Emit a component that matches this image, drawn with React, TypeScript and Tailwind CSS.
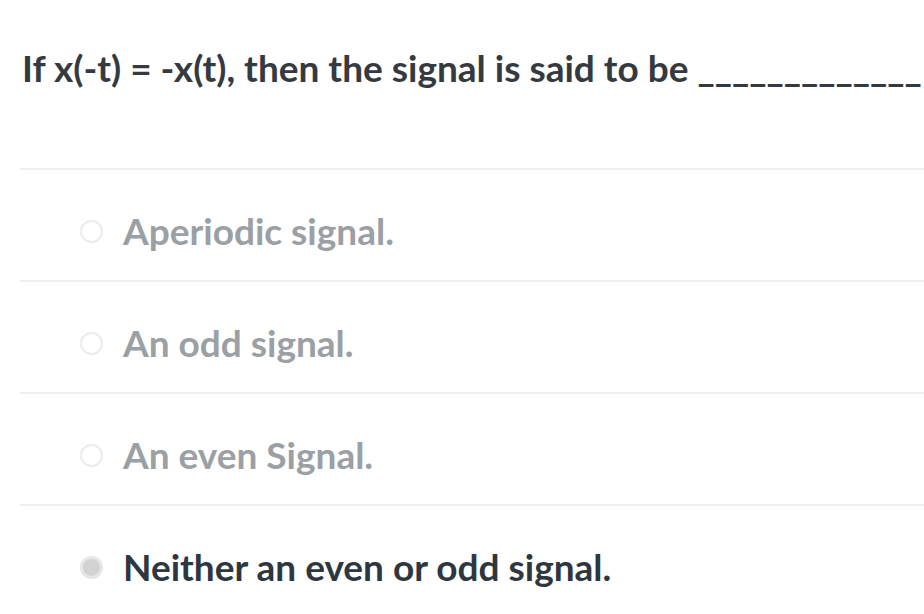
import React from 'react';

const options = [
  { label: 'Aperiodic signal.', selected: false },
  { label: 'An odd signal.', selected: false },
  { label: 'An even Signal.', selected: false },
  { label: 'Neither an even or odd signal.', selected: true },
];

const App = () => {
  return (
    <div className="w-[924px] h-[614px] overflow-hidden bg-white" style={{ fontFamily: 'Lato, "Noto Sans", sans-serif' }}>
      <div className="pl-[22px] pt-[43px] pb-[75px] whitespace-nowrap overflow-hidden">
        <h1 className="text-[37px] leading-[50px] font-bold text-[#343a40]">
          If x(-t) = -x(t), then the signal is said to be _____________
        </h1>
      </div>
      <div className="ml-[20px]">
        {options.map((o) => (
          <div key={o.label} className="border-t-2 border-[#eeeeee] h-[112px] flex items-center pl-[60px] pt-[12px]">
            {o.selected ? (
              <span className="w-[23px] h-[23px] rounded-full border-[3px] border-[#e6e6e6] bg-[#d2d2d2] shrink-0" />
            ) : (
              <span className="w-[23px] h-[23px] rounded-full border-2 border-[#ececec] bg-white shrink-0" />
            )}
            <span className={`ml-[20px] text-[37px] font-bold ${o.selected ? 'text-[#2e3740]' : 'text-[#9ba0a4]'}`}>
              {o.label}
            </span>
          </div>
        ))}
      </div>
    </div>
  );
};

export default App;
